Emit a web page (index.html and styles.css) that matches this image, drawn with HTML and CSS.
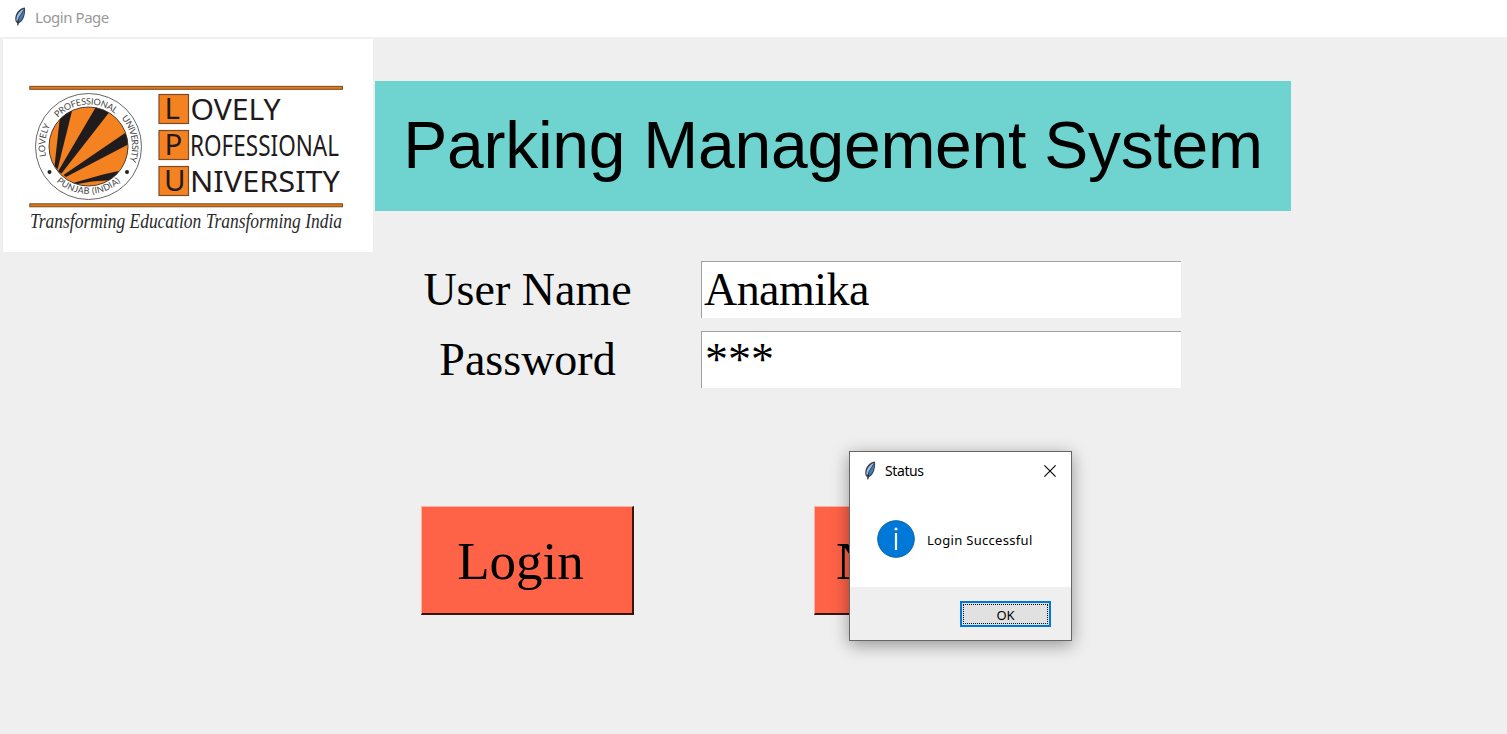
FILE: index.html
```html
<!DOCTYPE html>
<html lang="en">
<head>
<meta charset="utf-8">
<title>Login Page</title>
<link rel="stylesheet" href="styles.css">
</head>
<body>
<svg width="0" height="0" class="defs">
  <symbol id="feather" viewBox="0 0 12 20">
    <path d="M10.800.5C7 .8 3 4 1.600 9c-.6 2.400-.4 4.500.3 6l1.500 1.300.3 3.200 1.200-3.300c3.300-1.500 5.300-5.200 6-10 .3-2.200.4-4.200-.1-5.700z" fill="#36404a"/>
    <path d="M9.900 1.700C6.500 3.200 3.500 6.500 2.700 10c-.4 2-.3 3.300.2 4.500L8.500 5z" fill="#a3bfdd"/>
    <path d="M10.200 2.500c.3 4-1.400 10-5.200 12.200L4.700 11z" fill="#3f7cc4"/>
    <path d="M9.500 3.500L5 10.500 3.700 18" fill="none" stroke="#26384e" stroke-width=".8"/>
  </symbol>
</svg>
<header class="titlebar">
  <svg class="feather"><use href="#feather"/></svg>
  <span class="titlebar-text">Login Page</span>
</header>
<main class="window">
  <section class="top">
    <div class="logo">
      <svg width="370" height="213" viewBox="3 39 370 213">
        <defs>
          <clipPath id="disc"><circle cx="88.500" cy="146.500" r="39.500"/></clipPath>
          <path id="arcTop" d="M46.600 149.400A42 42 0 0 1 130.400 143.600"/>
          <path id="arcLeft" d="M82.400 189.600A43.500 43.500 0 0 1 94.600 103.400"/>
          <path id="arcRight" d="M80.600 103.700A43.500 43.500 0 0 1 96.400 189.300"/>
          <path id="arcBottom" d="M49 173.300A48 48 0 0 0 128 173.300"/>
        </defs>
        <g fill="#e27a12" stroke="#684020" stroke-width=".9">
          <rect x="29.800" y="86.300" width="312.700" height="3"/>
          <rect x="29.800" y="203.800" width="312.700" height="3"/>
        </g>
        <circle cx="88.500" cy="146.500" r="53" fill="#fff" stroke="#555" stroke-width=".9"/>
        <circle cx="88.500" cy="146.500" r="39.500" fill="#f48221"/>
        <g clip-path="url(#disc)" fill="#201c1d">
          <path d="M54.500 166L60.500 112 73 107 57.500 169.500z"/>
          <path d="M58 171.500L96.500 106 111 110 61.500 173.500z"/>
          <path d="M63.500 175L128 131V144.500L66 177z"/>
          <path d="M71 183.500L103 174.500 123 170 113 180 92 181.500 72 185z"/>
        </g>
        <circle cx="88.500" cy="146.500" r="39.500" fill="none" stroke="#3a3028" stroke-width=".9"/>
        <g class="seal-text">
          <text><textPath href="#arcTop" startOffset="50%" text-anchor="middle" textLength="63">PROFESSIONAL</textPath></text>
          <text><textPath href="#arcLeft" startOffset="50%" text-anchor="middle" textLength="32">LOVELY</textPath></text>
          <text><textPath href="#arcRight" startOffset="50%" text-anchor="middle" textLength="46">UNIVERSITY</textPath></text>
          <text><textPath href="#arcBottom" startOffset="50%" text-anchor="middle" textLength="70">PUNJAB (INDIA)</textPath></text>
        </g>
        <circle cx="49.500" cy="172" r="2" fill="#222"/>
        <circle cx="127" cy="172" r="2" fill="#222"/>
        <g fill="#f48221" stroke="#7a4b28" stroke-width="1.200">
          <rect x="159" y="94.500" width="29.500" height="29"/>
          <rect x="159" y="130.500" width="29.500" height="29"/>
          <rect x="159" y="166.500" width="29.500" height="29"/>
        </g>
        <g class="logo-word">
          <text x="164.500" y="119">L</text>
          <text x="164.500" y="155">P</text>
          <text x="164" y="191">U</text>
          <text x="190.500" y="119.500" textLength="90" lengthAdjust="spacingAndGlyphs">OVELY</text>
          <text x="190" y="155.500" textLength="149" lengthAdjust="spacingAndGlyphs">ROFESSIONAL</text>
          <text x="190" y="191.500" textLength="150" lengthAdjust="spacingAndGlyphs">NIVERSITY</text>
        </g>
        <text class="logo-tag" x="30" y="228" textLength="312" lengthAdjust="spacingAndGlyphs">Transforming Education Transforming India</text>
      </svg>
    </div>
    <h1 class="banner">Parking Management System</h1>
  </section>
  <section class="form">
    <label class="label">User Name</label>
    <div class="entry">Anamika</div>
    <label class="label">Password</label>
    <div class="entry entry-secret">***</div>
  </section>
  <section class="buttons">
    <div class="button">Login</div>
    <div class="button button-second">N</div>
  </section>
</main>
<div class="dialog">
  <div class="dialog-title">
    <svg class="feather"><use href="#feather"/></svg>
    <span class="dialog-name">Status</span>
    <svg class="close" viewBox="0 0 12 12"><path d="M.4.400l11.200 11.200M11.600.4L.4 11.600" stroke="#000" stroke-width="1.100"/></svg>
  </div>
  <div class="dialog-body">
    <svg class="info" viewBox="0 0 38 38"><circle cx="19" cy="19" r="18.300" fill="#0078d7" stroke="#0b62ad" stroke-width="1"/><path d="M17.700 7.700h2.600v2.600h-2.600zM17.900 13h2.200v17h-2.200z" fill="#fff"/></svg>
    <span class="message">Login Successful</span>
  </div>
  <div class="dialog-footer"><div class="ok"><div class="ok-focus">OK</div></div></div>
</div>
</body>
</html>
```
FILE: styles.css
```css
* { box-sizing: border-box; }
body {
  margin: 0;
  width: 1507px;
  height: 734px;
  overflow: hidden;
  position: relative;
  background: #efefef;
  color: #000;
  font-family: "Liberation Serif", serif;
}
.defs { position: absolute; }
.titlebar {
  height: 37px;
  background: #fff;
  display: flex;
  align-items: center;
  padding: 0 0 3px 14px;
  font: 15px "Noto Sans", sans-serif;
  color: #999;
}
.feather { width: 12px; height: 20px; flex: none; }
.titlebar-text { margin-left: 9px; letter-spacing: -.45px; white-space: nowrap; }
.window { padding: 2px 0 0 3px; }
.top { display: flex; align-items: center; gap: 2px; }
.logo { width: 370px; height: 213px; background: #fff; }
.logo svg { display: block; }
.seal-text { font: 9px "Lato", sans-serif; fill: #444; }
.logo-word { font: 29.500px "Noto Sans", sans-serif; fill: #1f1b1c; }
.logo-tag { font: italic 21px "Liberation Serif", serif; fill: #2a2a2a; }
.banner {
  margin: 0;
  width: 916px;
  height: 130px;
  background: #6fd3cf;
  font: 66px/128px "Liberation Sans", sans-serif;
  letter-spacing: -.25px;
  text-align: center;
  white-space: nowrap;
}
.form {
  display: grid;
  grid-template-columns: 213px 480px;
  grid-auto-rows: 57px;
  column-gap: 67px;
  row-gap: 13px;
  margin: 9px 0 0 418px;
  font-size: 46px;
  line-height: 56px;
}
.label { text-align: center; padding-top: 1px; }
.entry {
  background: #fff;
  border-top: 1px solid #a0a0a0;
  border-left: 1px solid #a0a0a0;
  padding-left: 2px;
  letter-spacing: -.55px;
}
.entry-secret { letter-spacing: 0; padding-left: 3px; }
.buttons { display: flex; gap: 180px; margin: 118px 0 0 418px; }
.button {
  width: 213px;
  height: 109px;
  background: #ff6347;
  border: 1px solid #ffb3a5;
  border-right: 2px solid #35150f;
  border-bottom: 2px solid #35150f;
  font-size: 53px;
  line-height: 109px;
  text-align: center;
  padding-right: 13px;
}
.button-second { text-align: left; padding-left: 21px; }
.dialog {
  position: absolute;
  left: 849px;
  top: 451px;
  width: 223px;
  height: 190px;
  border: 1px solid #666;
  background: #fff;
  box-shadow: 0 4px 16px rgba(0, 0, 0, .38);
  display: flex;
  flex-direction: column;
  font-family: "Noto Sans", sans-serif;
}
.dialog-title { display: flex; align-items: center; height: 37px; padding: 0 15px 0 14px; font-size: 14px; }
.dialog-name { margin-left: 9px; flex: 1; letter-spacing: -.4px; }
.close { width: 12px; height: 12px; }
.dialog-body { display: flex; align-items: center; flex: 1; padding: 1px 0 0 27px; font-size: 13px; }
.info { width: 38px; height: 38px; }
.message { margin: 3px 0 0 12px; white-space: nowrap; letter-spacing: .3px; }
.dialog-footer { height: 53px; background: #efefef; display: flex; justify-content: flex-end; padding: 14px 20px 0 0; }
.ok { width: 91px; height: 26px; padding: 1px; border: 2px solid #0078d7; font-size: 13px; background: #e1e1e1; }
.ok-focus { height: 20px; border: 1px dotted #111; line-height: 20px; text-align: center; }
```
